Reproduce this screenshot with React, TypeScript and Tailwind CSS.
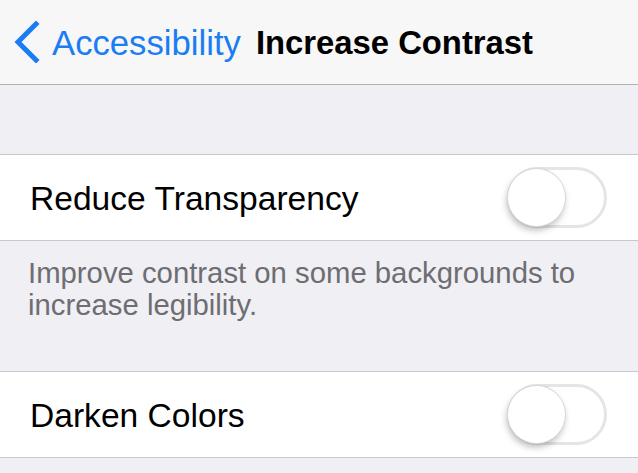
import { useState } from "react";

interface ToggleProps {
  on: boolean;
  onChange: (v: boolean) => void;
}

function Toggle({ on, onChange }: ToggleProps) {
  return (
    <button
      type="button"
      onClick={() => onChange(!on)}
      className={`relative w-[100px] h-[61px] rounded-full border-[3px] ${on ? "bg-[#4cd964] border-[#4cd964]" : "bg-white border-[#e5e5e5]"}`}
    >
      <span
        className={`absolute top-[-1px] w-[57px] h-[57px] rounded-full bg-white shadow-[-1px_4px_7px_rgba(0,0,0,0.28)] ring-1 ring-[#d8d8d8] ${on ? "right-[-2px]" : "left-[-2px]"}`}
      />
    </button>
  );
}

interface RowProps {
  label: string;
  on: boolean;
  onChange: (v: boolean) => void;
}

function SwitchRow({ label, on, onChange }: RowProps) {
  return (
    <div className="bg-white border-y border-[#c8c7cc] h-[87px] flex items-center justify-between pl-[30px] pr-[31px]">
      <span className="text-[33.6px] text-black pt-[3px]">{label}</span>
      <Toggle on={on} onChange={onChange} />
    </div>
  );
}

export default function App() {
  const [reduce, setReduce] = useState(false);
  const [darken, setDarken] = useState(false);

  return (
    <div className="w-[638px] h-[473px] overflow-hidden bg-[#efeff4] font-[Liberation_Sans,Arial,sans-serif]">
      <div className="h-[85px] bg-[#f7f7f8] border-b border-[#b2b2b2] flex items-center pl-[14px]">
        <svg width="26" height="42" viewBox="0 0 26 42" className="mr-[12px]">
          <polyline points="22,3 4,21 22,39" fill="none" stroke="#1a7ef2" strokeWidth="5" strokeLinecap="square" strokeLinejoin="miter" />
        </svg>
        <span className="text-[34.7px] text-[#1a7ef2] pt-[2px]">Accessibility</span>
        <span className="text-[32.8px] font-bold text-black ml-[15px] pt-[2px]">Increase Contrast</span>
      </div>

      <div className="h-[69px]" />

      <SwitchRow label="Reduce Transparency" on={reduce} onChange={setReduce} />

      <div className="h-[130px] pt-[16px] px-[28px] text-[29.3px] leading-[32px] text-[#6d6d72]">
        Improve contrast on some backgrounds to increase legibility.
      </div>

      <SwitchRow label="Darken Colors" on={darken} onChange={setDarken} />
    </div>
  );
}
